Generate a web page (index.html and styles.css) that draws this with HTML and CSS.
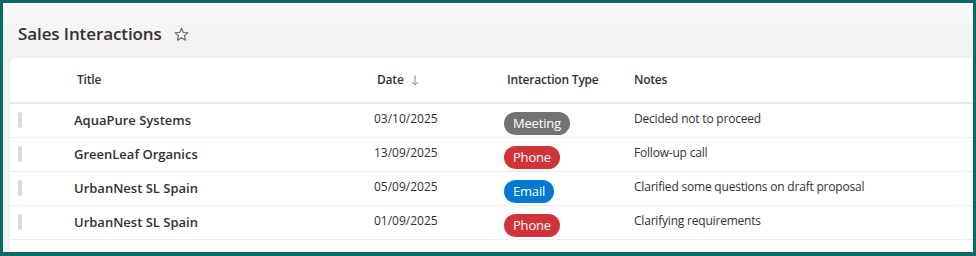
FILE: index.html
```html
<!DOCTYPE html>
<html>
<head>
<meta charset="utf-8">
<link rel="stylesheet" href="styles.css">
</head>
<body>
<div class="frame">
  <div class="page-head">
    <h1 class="page-title">Sales Interactions</h1>
    <svg class="star" width="15" height="15" viewBox="0 0 14 14"><path d="M7 1.2 L8.7 5.1 L12.9 5.4 L9.7 8.1 L10.7 12.3 L7 10 L3.3 12.3 L4.3 8.1 L1.1 5.4 L5.3 5.1 Z" fill="none" stroke="#605e5c" stroke-width="1" stroke-linejoin="round"/></svg>
  </div>
  <div class="card">
    <div class="row head">
      <div class="cell ind"></div>
      <div class="cell title hcell">Title</div>
      <div class="cell date hcell">Date <svg class="sort" width="8" height="11" viewBox="0 0 8 11"><path d="M4 0.5 V10 M1 7 L4 10 L7 7" fill="none" stroke="#6b87a8" stroke-width="1"/></svg></div>
      <div class="cell type hcell">Interaction Type</div>
      <div class="cell notes hcell">Notes</div>
    </div>
    <div class="row">
      <div class="cell ind"><span class="bar"></span></div>
      <div class="cell title">AquaPure Systems</div>
      <div class="cell date">03/10/2025</div>
      <div class="cell type"><span class="pill meeting">Meeting</span></div>
      <div class="cell notes">Decided not to proceed</div>
    </div>
    <div class="row">
      <div class="cell ind"><span class="bar"></span></div>
      <div class="cell title">GreenLeaf Organics</div>
      <div class="cell date">13/09/2025</div>
      <div class="cell type"><span class="pill phone">Phone</span></div>
      <div class="cell notes">Follow-up call</div>
    </div>
    <div class="row">
      <div class="cell ind"><span class="bar"></span></div>
      <div class="cell title">UrbanNest SL Spain</div>
      <div class="cell date">05/09/2025</div>
      <div class="cell type"><span class="pill email">Email</span></div>
      <div class="cell notes">Clarified some questions on draft proposal</div>
    </div>
    <div class="row">
      <div class="cell ind"><span class="bar"></span></div>
      <div class="cell title">UrbanNest SL Spain</div>
      <div class="cell date">01/09/2025</div>
      <div class="cell type"><span class="pill phone">Phone</span></div>
      <div class="cell notes">Clarifying requirements</div>
    </div>
  </div>
</div>
</body>
</html>
```
FILE: styles.css
```css
* { box-sizing: border-box; }
html, body { margin: 0; padding: 0; }
body {
  font-family: "Open Sans", "Noto Sans", sans-serif;
  color: #323130;
}
.frame {
  width: 976px;
  height: 256px;
  border: 3px solid #0b6a63;
  border-bottom-width: 4px;
  background: linear-gradient(180deg, #f9f9f9 0%, #f1f1f1 60px, #f1f1f1 100%);
  overflow: hidden;
}
.page-head {
  display: flex;
  gap: 12px;
  padding: 19px 0 0 15px;
  height: 55px;
  align-items: flex-start;
}
.page-title {
  margin: 0;
  font-size: 17px;
  line-height: 24px;
  font-weight: 600;
  color: #323130;
  letter-spacing: -0.1px;
}
.star { margin-top: 5px; }
.card {
  margin-left: 7px;
  background: #fff;
  border-radius: 6px 0 0 0;
  height: 200px;
  box-shadow: 0 0 2px rgba(0,0,0,0.06);
}
.row {
  display: grid;
  grid-template-columns: 64px 300px 130px 130px 1fr;
  height: 34px;
  border-bottom: 1px solid #ededed;
  align-items: start;
}
.row.head {
  height: 46px;
  border-bottom: 2px solid #e6e6e6;
  align-items: center;
}
.cell { font-size: 12px; line-height: 16px; white-space: nowrap; letter-spacing: -0.2px; }
.hcell { font-weight: 600; padding-left: 3px; }
.head .notes { padding-left: 0; }
.head .date { display: flex; align-items: center; gap: 7px; }
.sort { margin-top: 1px; }
.ind { padding: 8px 0 0 8px; }
.bar {
  display: block;
  width: 4px;
  height: 16px;
  border-radius: 2px;
  background: #dadada;
}
.row:not(.head) .title {
  font-size: 13px;
  font-weight: 600;
  line-height: 18px;
  padding-top: 7px;
  letter-spacing: 0;
}
.row:not(.head) .date { padding-top: 7px; letter-spacing: 0; }
.row:not(.head) .notes { padding-top: 7px; }
.row:not(.head) .type { padding-top: 8px; }
.pill {
  display: inline-block;
  height: 23px;
  line-height: 23px;
  padding: 0 9px;
  border-radius: 12px;
  color: #fff;
  font-size: 13px;
  letter-spacing: -0.2px;
}
.meeting { background: #737373; }
.phone { background: #d13438; }
.email { background: #0078d4; }
```
